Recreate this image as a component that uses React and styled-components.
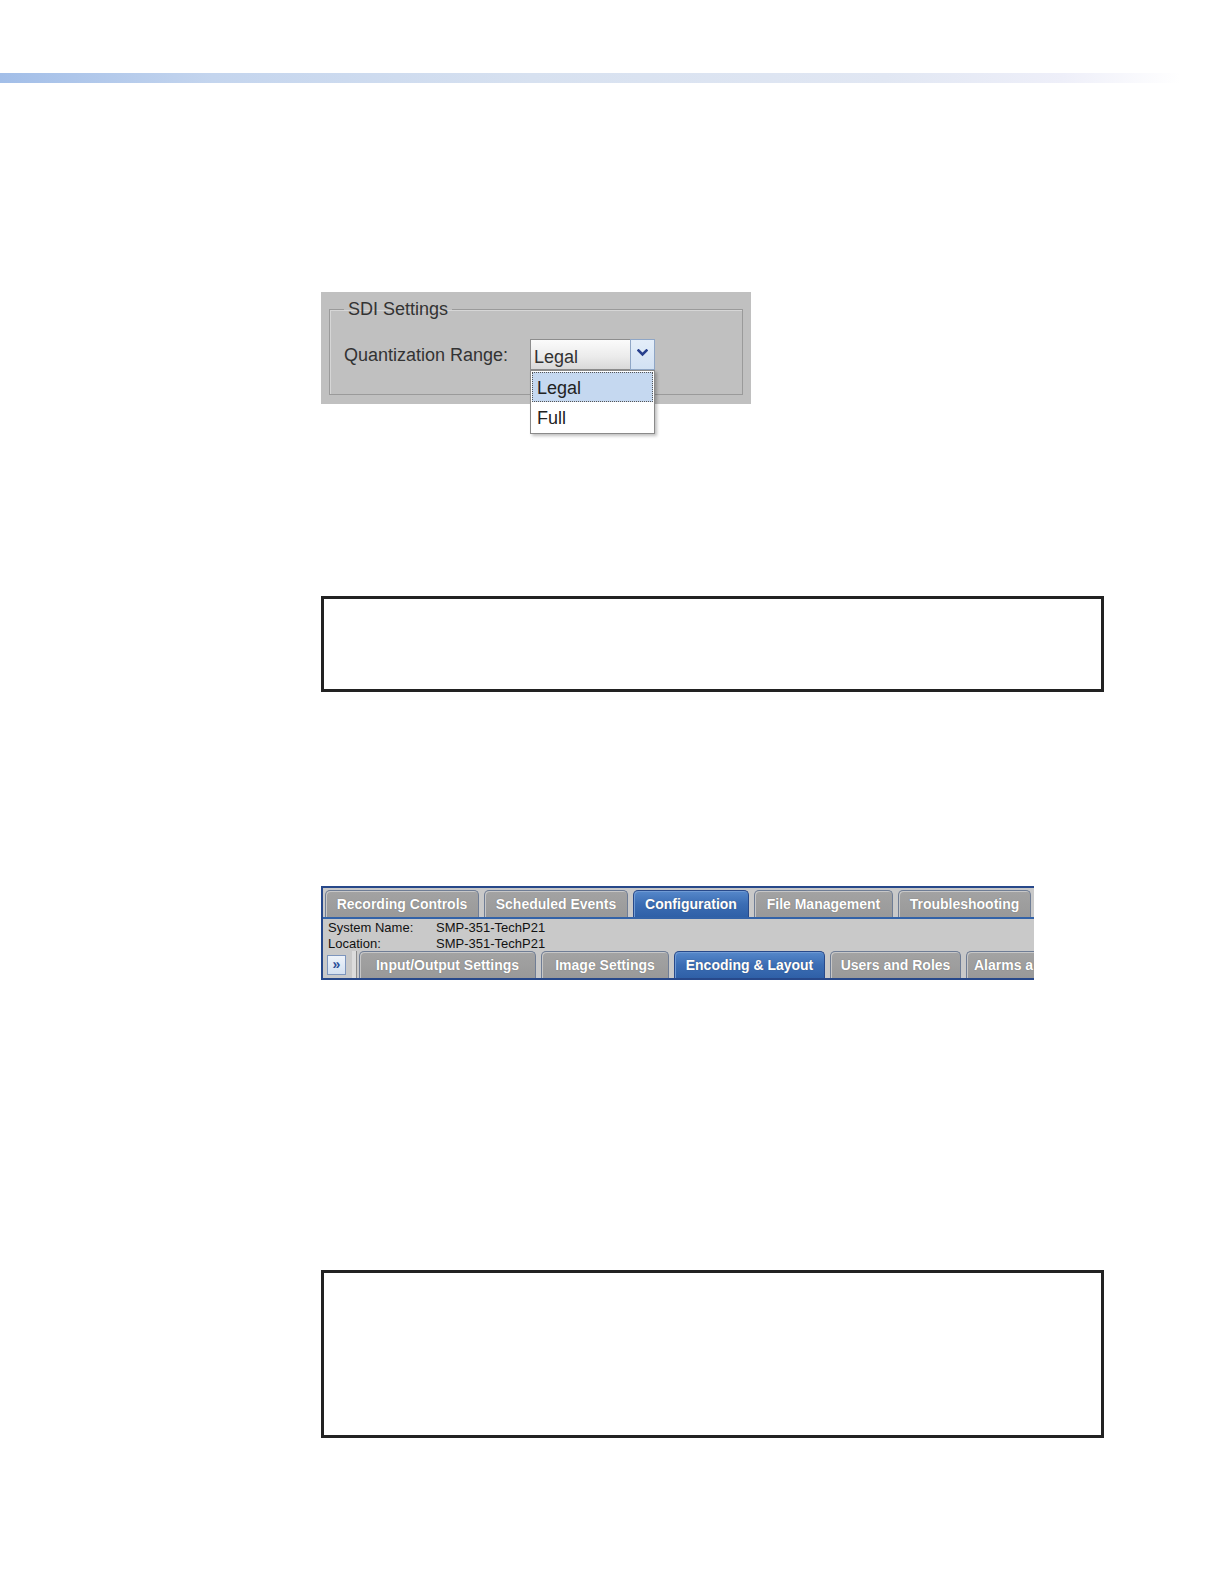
import React from 'react'
import styled, { createGlobalStyle } from 'styled-components'

const GlobalStyle = createGlobalStyle`
  html, body {
    margin: 0;
    padding: 0;
    background: #ffffff;
    font-family: "Liberation Sans", Arial, sans-serif;
  }
  html {
    overflow: hidden;
  }
`

const Page = styled.div`
  width: 1224px;
  height: 1584px;
  padding-top: 73px;
  box-sizing: border-box;
  overflow: hidden;
`

const HeaderBar = styled.div`
  width: 1180px;
  height: 10px;
  background: linear-gradient(
    to right,
    #a2bee8 0%,
    #c4d5ee 18%,
    #d7e1f0 45%,
    #e1e7f3 75%,
    #eeeff9 90%,
    #ffffff 100%
  );
`

const Content = styled.div`
  margin-left: 321px;
  display: flex;
  flex-direction: column;
  align-items: flex-start;
`

/* ---- SDI settings screenshot ---- */

const Panel = styled.div`
  margin-top: 209px;
  width: 430px;
  height: 112px;
  box-sizing: border-box;
  padding: 7px 8px 9px;
  background: #c0c0c0;
  font-family: "Liberation Sans", Tahoma, sans-serif;
  color: #333333;
`

const Group = styled.fieldset`
  margin: 0;
  padding: 20px 14px 24px;
  border: 1px solid #9a9a9a;
  box-shadow: inset 1px 1px 0 #d6d6d6;
  height: 96px;
  box-sizing: border-box;
`

const Legend = styled.legend`
  padding: 0 4px;
  font-size: 18px;
  line-height: 20px;
  color: #333333;
`

const FieldRow = styled.div`
  display: flex;
  align-items: center;
  height: 31px;
`

const Label = styled.span`
  width: 186px;
  font-size: 18px;
  padding-top: 2px;
`

const SelectWrap = styled.div`
  position: relative;
  width: 125px;
  height: 31px;
  display: flex;
`

const SelectValue = styled.div`
  flex: 1;
  box-sizing: border-box;
  border: 1px solid #8d8d8d;
  border-right: none;
  background: linear-gradient(to bottom, #fbfbfb 0%, #ececec 55%, #d9d9d9 100%);
  font-size: 18px;
  line-height: 31px;
  padding-left: 3px;
  padding-top: 2px;
`

const ArrowButton = styled.div`
  width: 25px;
  box-sizing: border-box;
  border: 1px solid #8fa6c6;
  background: linear-gradient(to bottom, #e4eef9 0%, #d2e1f3 100%);
  display: flex;
  justify-content: center;
  padding-top: 9px;
`

const DropList = styled.ul`
  position: absolute;
  left: 0;
  top: 31px;
  width: 125px;
  margin: 0;
  padding: 1px;
  box-sizing: border-box;
  list-style: none;
  background: #ffffff;
  border: 1px solid #8a8a8a;
  box-shadow: 2px 2px 3px rgba(0, 0, 0, 0.25);
`

const DropItem = styled.li`
  height: 30px;
  box-sizing: border-box;
  padding-left: 4px;
  font-size: 18px;
  line-height: 30px;
  color: #222222;
  background: ${p => (p.selected ? '#c5d8f0' : '#ffffff')};
  border: 1px dotted ${p => (p.selected ? '#555555' : 'transparent')};
`

/* ---- boxes ---- */

const NoteBox = styled.div`
  width: 783px;
  height: ${p => p.h}px;
  margin-top: ${p => p.mt}px;
  box-sizing: border-box;
  border: 3px solid #222222;
  background: #ffffff;
`

/* ---- tab bar screenshot ---- */

const TabShot = styled.div`
  margin-top: 194px;
  width: 713px;
  height: 94px;
  box-sizing: border-box;
  border: 2px solid #27488a;
  border-right: none;
  background: #c9c9c9;
  overflow: hidden;
  font-family: "Liberation Sans", Tahoma, sans-serif;
`

const TabRow = styled.div`
  display: flex;
  align-items: flex-end;
  gap: 5px;
  height: 27px;
  padding: ${p => (p.top ? '2px 0 0 2px' : '0 0 0 4px')};
  border-bottom: ${p => (p.top ? '2px solid #3363a8' : 'none')};
  white-space: nowrap;
  overflow: hidden;
`

const Tab = styled.div`
  flex: none;
  width: ${p => p.w}px;
  height: 27px;
  box-sizing: border-box;
  border: 1px solid ${p => (p.active ? '#27498a' : '#6f7d95')};
  border-bottom: none;
  border-right: ${p => (p.open ? 'none' : '')};
  border-radius: ${p => (p.open ? '5px 0 0 0' : '5px 5px 0 0')};
  box-shadow: inset 1px 1px 0 ${p => (p.active ? '#6f9ad4' : '#c7c7c7')};
  background: ${p =>
    p.active
      ? 'linear-gradient(to bottom, #5688ca 0%, #3b6db4 50%, #2f60a7 100%)'
      : 'linear-gradient(to bottom, #a3a3a3 0%, #999999 100%)'};
  color: #ffffff;
  font-size: 14px;
  font-weight: bold;
  line-height: 27px;
  text-align: ${p => (p.open ? 'left' : 'center')};
  padding-left: ${p => (p.open ? 7 : 0)}px;
  text-shadow: 0 0 1px rgba(60, 60, 60, 0.6);
`

const Info = styled.div`
  height: 32px;
  box-sizing: border-box;
  padding: 1px 0 0 5px;
  display: grid;
  grid-template-columns: 108px auto;
  font-size: 13px;
  line-height: 15px;
  color: #111111;
`

const ExpandButton = styled.div`
  flex: none;
  align-self: center;
  width: 19px;
  height: 20px;
  box-sizing: border-box;
  border: 1px solid #7d95bd;
  background: linear-gradient(to bottom, #eef3fa, #d3e0f1);
  color: #2a4d98;
  font-size: 14px;
  font-weight: bold;
  line-height: 16px;
  text-align: center;
`

const Divider = styled.div`
  flex: none;
  align-self: stretch;
  width: 4px;
  margin: 0 -3px 0 1px;
  background: #dcdcdc;
  border-right: 1px solid #8c8c8c;
`

const Chevron = () => (
  <svg width="11" height="8" viewBox="0 0 11 8">
    <polyline
      points="1.5,1.5 5.5,5.5 9.5,1.5"
      fill="none"
      stroke="#28408e"
      strokeWidth="2.6"
      strokeLinecap="square"
    />
  </svg>
)

const topTabs = [
  { label: 'Recording Controls', w: 154 },
  { label: 'Scheduled Events', w: 144 },
  { label: 'Configuration', w: 116, active: true },
  { label: 'File Management', w: 139 },
  { label: 'Troubleshooting', w: 133 },
]

const subTabs = [
  { label: 'Input/Output Settings', w: 177 },
  { label: 'Image Settings', w: 128 },
  { label: 'Encoding & Layout', w: 151, active: true },
  { label: 'Users and Roles', w: 131 },
  { label: 'Alarms a', w: 70, open: true },
]

export default function App() {
  return (
    <>
      <GlobalStyle />
      <Page>
        <HeaderBar />
        <Content>
          <Panel>
            <Group>
              <Legend>SDI Settings</Legend>
              <FieldRow>
                <Label>Quantization Range:</Label>
                <SelectWrap>
                  <SelectValue>Legal</SelectValue>
                  <ArrowButton>
                    <Chevron />
                  </ArrowButton>
                  <DropList>
                    <DropItem selected>Legal</DropItem>
                    <DropItem>Full</DropItem>
                  </DropList>
                </SelectWrap>
              </FieldRow>
            </Group>
          </Panel>

          <NoteBox mt={192} h={96} />

          <TabShot>
            <TabRow top>
              {topTabs.map(t => (
                <Tab key={t.label} w={t.w} active={t.active}>
                  {t.label}
                </Tab>
              ))}
            </TabRow>
            <Info>
              <span>System Name:</span>
              <span>SMP-351-TechP21</span>
              <span>Location:</span>
              <span>SMP-351-TechP21</span>
            </Info>
            <TabRow>
              <ExpandButton>»</ExpandButton>
              <Divider />
              {subTabs.map(t => (
                <Tab key={t.label} w={t.w} active={t.active} open={t.open}>
                  {t.label}
                </Tab>
              ))}
            </TabRow>
          </TabShot>

          <NoteBox mt={290} h={168} />
        </Content>
      </Page>
    </>
  )
}
